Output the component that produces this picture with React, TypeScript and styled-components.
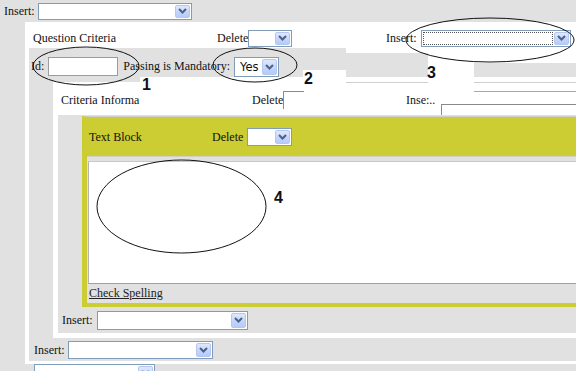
import React from "react";
import styled, { createGlobalStyle } from "styled-components";

const GlobalStyle = createGlobalStyle`
  html, body { margin: 0; padding: 0; overflow: hidden; background: #e1e1e1; }
  body { font-family: "Liberation Serif", "Times New Roman", serif; font-size: 12px; color: #111; }
`;

const Page = styled.div`
  position: relative;
  width: 576px;
  height: 371px;
  overflow: hidden;
  background: #e1e1e1;
`;

const Label = styled.span`
  font-family: "Liberation Serif", "Times New Roman", serif;
  font-size: 12px;
  line-height: 14px;
  white-space: nowrap;
  color: #111;
`;

const TopRow = styled.div`
  display: flex;
  align-items: center;
  gap: 3px;
  height: 22px;
  padding-left: 4px;
`;

const Panel = styled.div<{ $indent: number; $bottom: number }>`
  margin-left: ${(p) => p.$indent}px;
  background: #fff;
  padding-bottom: ${(p) => p.$bottom}px;
`;

const PanelHeader = styled.div<{ $h: number; $cols: string; $pt: number }>`
  box-sizing: border-box;
  height: ${(p) => p.$h}px;
  padding: ${(p) => p.$pt}px 0 0 8px;
  display: grid;
  grid-template-columns: ${(p) => p.$cols};
  align-items: center;
  background: #fff;
`;

const Group = styled.div<{ $gap?: number }>`
  display: flex;
  align-items: center;
  gap: ${(p) => p.$gap ?? 0}px;
  height: 100%;
`;

const PanelBody = styled.div<{ $left: number; $pt?: number }>`
  margin-left: ${(p) => p.$left}px;
  background: #e1e1e1;
  padding-top: ${(p) => p.$pt ?? 0}px;
  display: flex;
  flex-direction: column;
`;

const IdRow = styled.div`
  box-sizing: border-box;
  height: 34px;
  padding: 9px 0 0 2px;
  display: flex;
  align-items: flex-start;
  gap: 4px;
  & > span { line-height: 19px; }
`;

const TextInput = styled.span<{ $w: number; $h: number }>`
  display: inline-block;
  box-sizing: border-box;
  width: ${(p) => p.$w}px;
  height: ${(p) => p.$h}px;
  border: 1px solid #9c9c9c;
  background: #fff;
  margin-right: 1px;
`;

const CutBox = styled.span<{ $w: number; $h: number; $self?: string; $ml?: number }>`
  display: inline-block;
  box-sizing: border-box;
  width: ${(p) => p.$w}px;
  height: ${(p) => p.$h}px;
  margin-left: ${(p) => p.$ml ?? 0}px;
  border-top: 1px solid #8a8a8a;
  border-left: 1px solid #8a8a8a;
  background: #fff;
  align-self: ${(p) => p.$self ?? "center"};
`;

const SelectBox = styled.span<{ $w: number; $h: number }>`
  display: inline-flex;
  box-sizing: border-box;
  width: ${(p) => p.$w}px;
  height: ${(p) => p.$h}px;
  border: 1px solid #7f9db9;
  background: #fff;
  align-items: stretch;
  padding: 1px;
  flex: none;
`;

const SelectValue = styled.span<{ $focus?: boolean }>`
  flex: 1;
  box-sizing: border-box;
  font-family: "DejaVu Sans", Verdana, sans-serif;
  font-size: 11.5px;
  line-height: 15px;
  padding-left: 3px;
  color: #111;
  border: 1px ${(p) => (p.$focus ? "dotted #555" : "solid transparent")};
  margin-right: 1px;
  display: flex;
  align-items: center;
`;

const ArrowButton = styled.span`
  width: 15px;
  box-sizing: border-box;
  border: 1px solid #b5c7f0;
  border-radius: 2px;
  background: linear-gradient(180deg, #dfe8fd 0%, #c4d5fc 55%, #b6cbfb 100%);
  display: flex;
  align-items: center;
  justify-content: center;
`;

const Select: React.FC<{ w: number; h: number; value?: string; focus?: boolean }> = ({ w, h, value, focus }) => (
  <SelectBox $w={w} $h={h}>
    <SelectValue $focus={focus}>{value}</SelectValue>
    <ArrowButton>
      <svg width="9" height="6" viewBox="0 0 9 6">
        <path d="M1 1 L4.5 4.5 L8 1" fill="none" stroke="#4d6185" strokeWidth="2" />
      </svg>
    </ArrowButton>
  </SelectBox>
);

const TextBlock = styled.div`
  margin-left: 24px;
  border-top: 1px solid #cfcfcf;
  border-left: 5px solid #cccc33;
  border-bottom: 4px solid #cccc33;
  background: #e1e1e1;
`;

const TBHeader = styled.div`
  box-sizing: border-box;
  height: 39px;
  padding: 1px 0 0 2px;
  background: #cccc33;
  display: grid;
  grid-template-columns: 123px auto;
  align-items: center;
`;

const TBBody = styled.div`
  padding: 4px 0 0 1px;
  border-top: 1px solid #d2d2c4;
`;

const TextArea = styled.div`
  box-sizing: border-box;
  height: 123px;
  background: #fff;
  border-left: 1px solid #b4b4b4;
  border-top: 1px solid #c8c8c8;
  border-bottom: 1px solid #a0a0a0;
`;

const SpellRow = styled.div`
  height: 19px;
  display: flex;
  align-items: center;
  padding-left: 1px;
`;

const SpellLink = styled.span`
  font-family: "Liberation Serif", "Times New Roman", serif;
  font-size: 12px;
  color: #222;
  text-decoration: underline;
`;

const InsertRow = styled.div<{ $h: number; $pl: number; $gap: number }>`
  height: ${(p) => p.$h}px;
  padding-left: ${(p) => p.$pl}px;
  display: flex;
  align-items: center;
  gap: ${(p) => p.$gap}px;
`;

const BottomRow = styled.div`
  padding-left: 34px;
  height: 20px;
`;

const Overlay = styled.div`
  position: absolute;
  inset: 0;
  pointer-events: none;
`;

const Patch = styled.div<{ $c?: string }>`
  position: absolute;
  background: ${(p) => p.$c ?? "#fff"};
`;

const Num = styled.div`
  position: absolute;
  font-family: "Liberation Sans", Arial, sans-serif;
  font-weight: bold;
  font-size: 16px;
  line-height: 16px;
  color: #111;
`;

export default function App() {
  return (
    <>
      <GlobalStyle />
      <Page>
        <TopRow>
          <Label>Insert:</Label>
          <Select w={154} h={17} />
        </TopRow>

        <Panel $indent={25} $bottom={3}>
          <PanelHeader $h={26} $pt={6} $cols="184px 169px auto">
            <Label>Question Criteria</Label>
            <Group>
              <Label>Delete</Label>
              <Select w={44} h={17} />
            </Group>
            <Group $gap={4}>
              <Label>Insert:</Label>
              <Select w={150} h={17} focus />
            </Group>
          </PanelHeader>

          <PanelBody $left={4}>
            <IdRow>
              <Label>Id:</Label>
              <TextInput $w={70} $h={19} />
              <Label>Passing is Mandatory:</Label>
              <Select w={45} h={20} value="Yes" />
            </IdRow>

            <Panel $indent={24} $bottom={5}>
              <PanelHeader $h={33} $pt={2} $cols="191px 154px auto">
                <Label>Criteria Informa</Label>
                <Group>
                  <Label>Delete</Label>
                  <CutBox $w={21} $h={18} />
                </Group>
                <Group $gap={3}>
                  <Label>Inse:..</Label>
                  <CutBox $w={140} $h={11} $self="flex-end" $ml={3} />
                </Group>
              </PanelHeader>

              <PanelBody $left={5} $pt={1}>
                <TextBlock>
                  <TBHeader>
                    <Label>Text Block</Label>
                    <Group $gap={4}>
                      <Label>Delete</Label>
                      <Select w={45} h={18} />
                    </Group>
                  </TBHeader>
                  <TBBody>
                    <TextArea />
                    <SpellRow>
                      <SpellLink>Check Spelling</SpellLink>
                    </SpellRow>
                  </TBBody>
                </TextBlock>
                <InsertRow $h={26} $pl={4} $gap={4}>
                  <Label>Insert:</Label>
                  <Select w={151} h={19} />
                </InsertRow>
              </PanelBody>
            </Panel>

            <InsertRow $h={23} $pl={5} $gap={3}>
              <Label>Insert:</Label>
              <Select w={145} h={18} />
            </InsertRow>
          </PanelBody>
        </Panel>

        <BottomRow>
          <Select w={121} h={18} />
        </BottomRow>

        <Overlay>
          <Patch style={{ left: 140, top: 77, width: 436, height: 5 }} />
          <Patch style={{ left: 303, top: 70, width: 43, height: 12 }} />
          <Patch style={{ left: 346, top: 47, width: 230, height: 6 }} />
          <Patch style={{ left: 428, top: 53, width: 148, height: 10 }} />
          <Patch style={{ left: 428, top: 63, width: 46, height: 27 }} />
          <Patch $c="#d0d0d0" style={{ left: 346, top: 82, width: 82, height: 1 }} />
          <Patch $c="#d0d0d0" style={{ left: 474, top: 82, width: 102, height: 1 }} />
          <Patch $c="#a8a8a8" style={{ left: 474, top: 91, width: 102, height: 1 }} />
          <svg width="576" height="371" style={{ position: "absolute", left: 0, top: 0 }}>
            <ellipse cx="86" cy="66" rx="53" ry="19" fill="none" stroke="#111" strokeWidth="1" />
            <ellipse cx="255" cy="65" rx="42" ry="17" fill="none" stroke="#111" strokeWidth="1" />
            <ellipse cx="490" cy="40" rx="84" ry="22" fill="none" stroke="#111" strokeWidth="1" />
            <ellipse cx="181.5" cy="206.5" rx="84.5" ry="46.5" fill="none" stroke="#111" strokeWidth="1" />
          </svg>
          <Num style={{ left: 142, top: 77 }}>1</Num>
          <Num style={{ left: 304, top: 71 }}>2</Num>
          <Num style={{ left: 427, top: 65 }}>3</Num>
          <Num style={{ left: 274, top: 190 }}>4</Num>
        </Overlay>
      </Page>
    </>
  );
}
